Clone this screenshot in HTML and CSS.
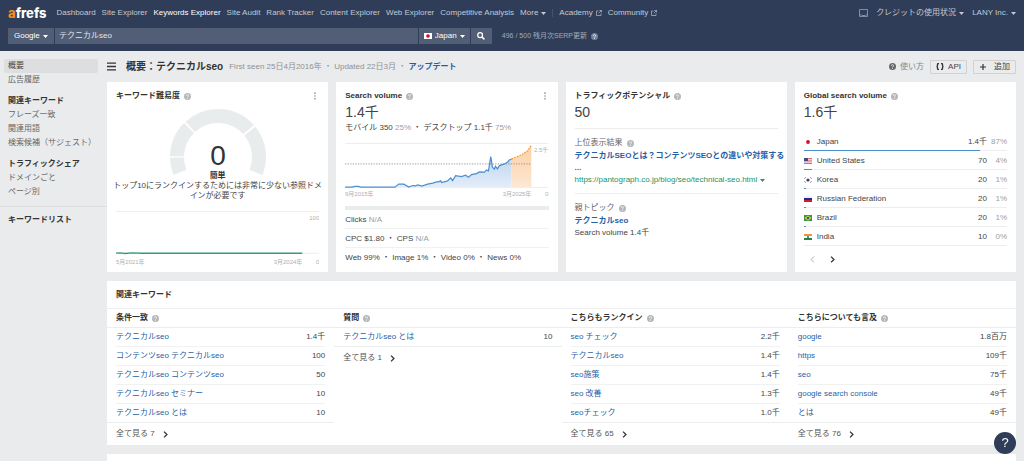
FILE: index.html
```html
<!DOCTYPE html>
<html lang="ja">
<head>
    <meta charset="UTF-8">
    <meta name="viewport" content="width=device-width, initial-scale=1.0">
    <title>概要：テクニカルseo</title>
    <link rel="stylesheet" href="styles.css">
</head>
<body>
<svg class="sprite" aria-hidden="true">
    <symbol id="help" viewBox="0 0 14 14">
        <circle cx="7" cy="7" r="7" fill="currentColor"/>
        <path d="M4.8 5.5a2.2 2.2 0 1 1 3.3 1.9c-.8.4-1.1.7-1.1 1.5M7 10.1v1.5" fill="none" stroke="#fff" stroke-width="1.5"/>
    </symbol>
    <symbol id="caret" viewBox="0 0 10 6">
        <path d="M0 0h10L5 6z" fill="currentColor"/>
    </symbol>
    <symbol id="external" viewBox="0 0 12 12">
        <path d="M5 2H1v9h9V7M7 1h4v4M11 1 5.5 6.5" fill="none" stroke="currentColor" stroke-width="1.3"/>
    </symbol>
    <symbol id="dots" viewBox="0 0 4 14">
        <circle cx="2" cy="2" r="1.4"/><circle cx="2" cy="7" r="1.4"/><circle cx="2" cy="12" r="1.4"/>
    </symbol>
    <symbol id="next" viewBox="0 0 8 12">
        <path d="m1.5 1 5 5-5 5" fill="none" stroke="currentColor" stroke-width="2.2"/>
    </symbol>
</svg>

<header class="topbar">
    <div class="topbar-row">
        <a class="logo" href="#"><span>a</span>frefs</a>
        <nav class="nav">
            <a href="#">Dashboard</a>
            <a href="#">Site Explorer</a>
            <a href="#" class="active">Keywords Explorer</a>
            <a href="#">Site Audit</a>
            <a href="#">Rank Tracker</a>
            <a href="#">Content Explorer</a>
            <a href="#">Web Explorer</a>
            <a href="#">Competitive Analysis</a>
            <button type="button">More <svg class="caret"><use href="#caret"/></svg></button>
            <span class="nav-divider"></span>
            <a href="#">Academy <svg class="external"><use href="#external"/></svg></a>
            <a href="#">Community <svg class="external"><use href="#external"/></svg></a>
        </nav>
        <div class="account">
            <svg class="inbox" viewBox="0 0 18 16"><path d="M1 1h16v14H1zM1 12h4l1 1h6l1-1h4" fill="none" stroke="currentColor" stroke-width="1.6"/></svg>
            <button type="button">クレジットの使用状況 <svg class="caret"><use href="#caret"/></svg></button>
            <button type="button">LANY Inc. <svg class="caret"><use href="#caret"/></svg></button>
        </div>
    </div>
    <div class="topbar-row search-row">
        <form class="search">
            <label class="search-select">
                <select aria-label="検索エンジン"><option>Google</option></select>
                <svg class="caret"><use href="#caret"/></svg>
            </label>
            <input type="text" aria-label="キーワード" value="テクニカルseo">
            <label class="search-select">
                <svg class="flag" viewBox="0 0 8 6"><path d="M0 0h8v6H0z" fill="#fff"/><circle cx="4" cy="3" r="1.8" fill="#c8102e"/></svg>
                <select aria-label="国"><option>Japan</option></select>
                <svg class="caret"><use href="#caret"/></svg>
            </label>
            <button type="submit" aria-label="検索">
                <svg class="glass" viewBox="0 0 14 14"><circle cx="5.5" cy="5.5" r="4.2" fill="none" stroke="#fff" stroke-width="2.2"/><path d="m8.5 8.5 4.5 4.5" stroke="#fff" stroke-width="2.8"/></svg>
            </button>
        </form>
        <div class="quota">496 / 500 残月次SERP更新 <svg class="help"><use href="#help"/></svg></div>
    </div>
</header>

<div class="layout">
    <aside class="sidebar">
        <a href="#" class="selected">概要</a>
        <a href="#">広告履歴</a>
        <h3>関連キーワード</h3>
        <a href="#">フレーズ一致</a>
        <a href="#">関連用語</a>
        <a href="#">検索候補（サジェスト）</a>
        <h3>トラフィックシェア</h3>
        <a href="#">ドメインごと</a>
        <a href="#">ページ別</a>
        <div class="sidebar-lists"><h3>キーワードリスト</h3></div>
    </aside>

    <main class="main">
        <div class="page-head">
            <button type="button" class="menu" aria-label="メニュー">
                <svg viewBox="0 0 8 8"><path d="M0 1h8M0 4h8M0 7h8" stroke="#333" stroke-width="1.2"/></svg>
            </button>
            <h1>概要：テクニカルseo</h1>
            <p>First seen 25日4月2016年 ・ Updated 22日3月 ・ <a href="#">アップデート</a></p>
            <div class="page-actions">
                <button type="button" class="how-to"><svg class="help"><use href="#help"/></svg> 使い方</button>
                <button type="button" class="outlined">
                    <svg class="braces" viewBox="0 0 16 14"><path d="M6 1H5Q3 1 3 3v2Q3 7 1 7q2 0 2 2v2q0 2 2 2h1M10 1h1q2 0 2 2v2q0 2 2 2-2 0-2 2v2q0 2-2 2h-1" fill="none" stroke="#333" stroke-width="2.6"/></svg>
                    API
                </button>
                <button type="button" class="outlined add">
                    <svg class="plus" viewBox="0 0 8 8"><path d="M4 1v6M1 4h6" stroke="#333" stroke-width="1.2"/></svg>
                    追加
                </button>
            </div>
        </div>

        <div class="cards">
            <section class="card">
                <div class="card-title">
                    <h2>キーワード難易度</h2>
                    <svg class="help"><use href="#help"/></svg>
                    <button type="button" class="more" aria-label="メニュー"><svg><use href="#dots"/></svg></button>
                </div>
                <div class="difficulty">
                    <svg class="gauge" viewBox="0 0 96 66">
                        <g fill="none" stroke="#e9ecec" stroke-width="14">
                            <path d="M10 63.4A41 41 0 0 1 7 48.7"/>
                            <path d="M7 47.3A41 41 0 0 1 19 19"/>
                            <path d="M20.3 17.8A41 41 0 0 1 78.5 20.6"/>
                            <path d="M79.9 22.2A41 41 0 0 1 86 63.4"/>
                        </g>
                        <text class="gauge-value" x="48" y="56">0</text>
                    </svg>
                    <strong>簡単</strong>
                    <p>トップ10にランクインするためには非常に少ない参照ドメ<br>インが必要です</p>
                </div>
                <svg class="chart" viewBox="0 0 204 56">
                    <path d="M0 .5h204M187 42.5h17" stroke="#eceded"/>
                    <path d="M0 42.3 4 42 9 42.6 16 42 26 42.4H187" fill="none" stroke="#2f9e74" stroke-width="1.4"/>
                    <text x="204" y="9" class="end">100</text>
                    <text x="0" y="53">5月2021年</text>
                    <text x="187" y="53" class="end">3月2024年</text>
                    <text x="204" y="53" class="end">0</text>
                </svg>
            </section>

            <section class="card">
                <div class="card-title">
                    <h2>Search volume</h2>
                    <svg class="help"><use href="#help"/></svg>
                    <button type="button" class="more" aria-label="メニュー"><svg><use href="#dots"/></svg></button>
                </div>
                <div class="big">1.4千</div>
                <div class="devices">モバイル 350 <span>25%</span> ・ デスクトップ 1.1千 <span>75%</span></div>
                <svg class="chart" viewBox="0 0 204 56">
                    <defs>
                        <linearGradient id="past" x1="0" y1="0" x2="0" y2="1">
                            <stop offset="0" stop-color="#bfd5ef"/>
                            <stop offset="1" stop-color="#e4edf8"/>
                        </linearGradient>
                        <linearGradient id="forecast" x1="0" y1="0" x2="0" y2="1">
                            <stop offset="0" stop-color="#fbd0a6"/>
                            <stop offset="1" stop-color="#fde7d4"/>
                        </linearGradient>
                    </defs>
                    <path d="M0 .5h204M0 44.5h204" stroke="#eceded"/>
                    <path d="M50 44.3 54 41.3H59L64 44 73 42 77 43.3 88 40.3 96 38 97 39.7 103 38 106 35 108 37.7 111 32.7 117 33.7 121 32.3 124 34.3 127 31.7 135 29 140 29.3 142 27 144 28 146.3 13.7 148 24.3 150 26.3 151 23.3 153 26 155 22.7 160 21 163 19.3 167.3 16V44.3z" fill="url(#past)"/>
                    <path d="M167.3 16 172 14 177 12 183 8 187 2.7V44.3H167.3z" fill="url(#forecast)"/>
                    <path d="M0 21h187" stroke="#858585" stroke-width=".8" stroke-dasharray="1.3 1.3"/>
                    <path d="M0 44.3H7L10 43.5H13L16 44.3H50L54 41.3H59L64 44.3 68 42.7 71 43 73 42 77 43.3 83 41.3 88 40.3 92 39H94L96 38 97 39.7 103 38 106 35 108 37.7 111 32.7 117 33.7 121 32.3 124 34.3 127 31.7 132 30.7 135 29 140 29.3 142 27 144 28 146.3 13.7 148 24.3 150 26.3 151 23.3 153 26 155 22.7 160 21 163 19.3 165 17 167.3 16" fill="none" stroke="#4a8fd0" stroke-width="1.2"/>
                    <path d="M167.3 16 172 14 177 12 183 8 187 2.7" fill="none" stroke="#f0963c" stroke-width="1.3" stroke-dasharray="1.6 1.2"/>
                    <text x="204" y="9" class="end">2.5千</text>
                    <text x="0" y="53">9月2015年</text>
                    <text x="187" y="53" class="end">3月2025年</text>
                    <text x="204" y="53" class="end">0</text>
                </svg>
                <div class="clicks-bar"></div>
                <div class="metric">Clicks <span>N/A</span></div>
                <div class="metric">CPC $1.80 ・ CPS <span>N/A</span></div>
                <div class="metric">Web 99% ・ Image 1% ・ Video 0% ・ News 0%</div>
            </section>

            <section class="card">
                <div class="card-title">
                    <h2>トラフィックポテンシャル</h2>
                    <svg class="help"><use href="#help"/></svg>
                </div>
                <div class="big">50</div>
                <div class="block">
                    <div class="block-label">上位表示結果 <svg class="help"><use href="#help"/></svg></div>
                    <a href="#" class="top-result">テクニカルSEOとは？コンテンツSEOとの違いや対策する<br>...</a>
                    <a href="#" class="url">https://pantograph.co.jp/blog/seo/technical-seo.html <svg class="caret"><use href="#caret"/></svg></a>
                </div>
                <div class="block">
                    <div class="block-label">親トピック <svg class="help"><use href="#help"/></svg></div>
                    <a href="#" class="parent-topic">テクニカルseo</a>
                    <div>Search volume 1.4千</div>
                </div>
            </section>

            <section class="card">
                <div class="card-title">
                    <h2>Global search volume</h2>
                    <svg class="help"><use href="#help"/></svg>
                </div>
                <div class="big">1.6千</div>
                <table class="countries">
                    <tr style="--share: 87%">
                        <td><svg class="flag" viewBox="0 0 8 6"><path d="M0 0h8v6H0z" fill="#fff"/><circle cx="4" cy="3" r="1.9" fill="#c8102e"/></svg></td>
                        <td>Japan</td><td>1.4千</td><td>87%</td>
                    </tr>
                    <tr style="--share: 4%">
                        <td><svg class="flag" viewBox="0 0 8 6"><path d="M0 0h8v6H0z" fill="#fff"/><path d="M0 .5h8M0 2.2h8M0 3.9h8M0 5.5h8" stroke="#d0485a" stroke-width=".8"/><path d="M0 0h4v3H0z" fill="#3c4a86"/></svg></td>
                        <td>United States</td><td>70</td><td>4%</td>
                    </tr>
                    <tr style="--share: 1%">
                        <td><svg class="flag" viewBox="0 0 8 6"><path d="M0 0h8v6H0z" fill="#fff"/><path d="M2.4 3a1.6 1.6 0 0 1 3.2 0z" fill="#c8102e"/><path d="M2.4 3a1.6 1.6 0 0 0 3.2 0z" fill="#1c3f8c"/><path d="m.6 1.5 1-1M.6 4.5l1 1M6.4.5l1 1M6.4 5.5l1-1" stroke="#222" stroke-width=".9"/></svg></td>
                        <td>Korea</td><td>20</td><td>1%</td>
                    </tr>
                    <tr style="--share: 1%">
                        <td><svg class="flag" viewBox="0 0 8 6"><path d="M0 0h8v2H0z" fill="#f4f4f4"/><path d="M0 2h8v2H0z" fill="#1a2a9c"/><path d="M0 4h8v2H0z" fill="#d01c28"/></svg></td>
                        <td>Russian Federation</td><td>20</td><td>1%</td>
                    </tr>
                    <tr style="--share: 1%">
                        <td><svg class="flag" viewBox="0 0 8 6"><path d="M0 0h8v6H0z" fill="#2f9a3c"/><path d="m4 .6 3.4 2.4L4 5.4.6 3z" fill="#f2d53c"/><circle cx="4" cy="3" r="1.3" fill="#2c4d94"/></svg></td>
                        <td>Brazil</td><td>20</td><td>1%</td>
                    </tr>
                    <tr style="--share: 0%">
                        <td><svg class="flag" viewBox="0 0 8 6"><path d="M0 0h8v2H0z" fill="#f0943a"/><path d="M0 2h8v2H0z" fill="#fff"/><path d="M0 4h8v2H0z" fill="#23893a"/><circle cx="4" cy="3" r=".9" fill="#33408c"/></svg></td>
                        <td>India</td><td>10</td><td>0%</td>
                    </tr>
                </table>
                <div class="pager">
                    <button type="button" aria-label="前へ" disabled><svg viewBox="0 0 8 12"><path d="m6.5 1-5 5 5 5" fill="none" stroke="currentColor" stroke-width="1.6"/></svg></button>
                    <button type="button" aria-label="次へ"><svg><use href="#next"/></svg></button>
                </div>
            </section>
        </div>

        <section class="related">
            <h2>関連キーワード</h2>
            <div class="related-columns">
                <div class="related-column">
                    <h3>条件一致 <svg class="help"><use href="#help"/></svg></h3>
                    <ul>
                        <li><a href="#">テクニカルseo</a><span>1.4千</span></li>
                        <li><a href="#">コンテンツseo テクニカルseo</a><span>100</span></li>
                        <li><a href="#">テクニカルseo コンテンツseo</a><span>50</span></li>
                        <li><a href="#">テクニカルseo セミナー</a><span>10</span></li>
                        <li><a href="#">テクニカルseo とは</a><span>10</span></li>
                    </ul>
                    <a href="#" class="view-all">全て見る 7 <svg><use href="#next"/></svg></a>
                </div>
                <div class="related-column">
                    <h3>質問 <svg class="help"><use href="#help"/></svg></h3>
                    <ul>
                        <li><a href="#">テクニカルseo とは</a><span>10</span></li>
                    </ul>
                    <a href="#" class="view-all">全て見る 1 <svg><use href="#next"/></svg></a>
                </div>
                <div class="related-column">
                    <h3>こちらもランクイン <svg class="help"><use href="#help"/></svg></h3>
                    <ul>
                        <li><a href="#">seo チェック</a><span>2.2千</span></li>
                        <li><a href="#">テクニカルseo</a><span>1.4千</span></li>
                        <li><a href="#">seo施策</a><span>1.4千</span></li>
                        <li><a href="#">seo 改善</a><span>1.3千</span></li>
                        <li><a href="#">seoチェック</a><span>1.0千</span></li>
                    </ul>
                    <a href="#" class="view-all">全て見る 65 <svg><use href="#next"/></svg></a>
                </div>
                <div class="related-column">
                    <h3>こちらについても言及 <svg class="help"><use href="#help"/></svg></h3>
                    <ul>
                        <li><a href="#">google</a><span>1.8百万</span></li>
                        <li><a href="#">https</a><span>109千</span></li>
                        <li><a href="#">seo</a><span>75千</span></li>
                        <li><a href="#">google search console</a><span>49千</span></li>
                        <li><a href="#">とは</a><span>49千</span></li>
                    </ul>
                    <a href="#" class="view-all">全て見る 76 <svg><use href="#next"/></svg></a>
                </div>
            </div>
        </section>

        <section class="next-panel"></section>
    </main>
</div>

<button type="button" class="support" aria-label="ヘルプ">?</button>
</body>
</html>
```
FILE: styles.css
```css
* {
    box-sizing: border-box;
}

body {
    display: flex;
    flex-direction: column;
    min-height: 100vh;
    margin: 0;
    background-color: #e9ebec;
    color: #444;
    font-family: "Liberation Sans", "Noto Sans CJK JP", sans-serif;
    font-size: 8px;
    line-height: 14px;
}

h1, h2, h3, p, ul {
    margin: 0;
    padding: 0;
    font-size: 8px;
}

h1, h2, h3 {
    color: #333;
}

a {
    color: #1f5fa8;
    text-decoration: none;
}

button, input, select {
    margin: 0;
    padding: 0;
    border: none;
    background: none;
    color: inherit;
    font: inherit;
}

button {
    cursor: pointer;
}

svg {
    flex: none;
}

.sprite {
    display: none;
}

.help {
    width: 7px;
    height: 7px;
    color: #b4b7ba;
}

.caret {
    width: 5px;
    height: 3px;
}

.external {
    width: 6px;
    height: 6px;
}

.flag {
    display: block;
    width: 8px;
    height: 6px;
}

/* top bar */
.topbar {
    height: 51px;
    padding: 5px 8px 0;
    background-color: #2f3d58;
    color: #c3c9d3;
}

.topbar-row {
    display: flex;
    align-items: center;
    height: 16px;
}

.logo {
    margin-right: 10px;
    color: #fff;
    font-family: Inter, sans-serif;
    font-size: 13px;
    font-weight: 800;
}

.logo span {
    color: #f68b1f;
}

.nav, .account {
    display: flex;
    align-items: center;
    white-space: nowrap;
}

.nav {
    gap: 6px;
}

.account {
    gap: 8px;
    margin-left: auto;
}

.nav a, .nav button, .account button {
    display: flex;
    align-items: center;
    gap: 3px;
    color: #c3c9d3;
}

.nav .active {
    color: #fff;
}

.nav-divider {
    width: 1px;
    height: 8px;
    background-color: #46536c;
}

.inbox {
    width: 9px;
    height: 8px;
    color: #97a1b2;
}

.search-row {
    margin-top: 7px;
}

.search {
    display: flex;
    gap: 1px;
    width: 48%;
    height: 16px;
    border-radius: 1px;
    overflow: hidden;
}

.search > * {
    background-color: #525e75;
}

.search input {
    flex: 1;
    min-width: 0;
    padding: 0 4px;
    color: #e4e7ec;
}

.search-select {
    display: flex;
    align-items: center;
    gap: 3px;
    padding: 0 6px;
    color: #fff;
}

.search-select:last-of-type {
    padding: 0 5px;
}

.search-select select {
    appearance: none;
}

.search button {
    width: 21px;
}

.glass {
    display: block;
    width: 8px;
    height: 8px;
    margin: 0 auto;
}

.quota {
    display: flex;
    align-items: center;
    gap: 4px;
    margin-left: 10px;
    font-size: 7px;
    color: #a3acba;
}

.quota .help {
    color: #76829a;
}

/* sidebar */
.layout {
    display: flex;
    flex: 1;
}

.sidebar {
    display: flex;
    flex: none;
    flex-direction: column;
    width: 107px;
    padding-top: 8px;
}

.sidebar a {
    margin: 0 9px 0 4px;
    padding: 0 4px;
    color: #666;
    white-space: nowrap;
}

.sidebar .selected {
    border-radius: 2px;
    background-color: #dcdedf;
    color: #444;
}

.sidebar h3 {
    margin-top: 7px;
    padding: 0 8px;
}

.sidebar-lists {
    margin-top: 7px;
    border-top: 1px solid #dcdedf;
}

.sidebar-lists h3 {
    margin-top: 6px;
}

/* page heading */
.main {
    display: flex;
    flex: 1;
    flex-direction: column;
    min-width: 0;
    padding-right: 8px;
}

.page-head {
    display: flex;
    align-items: center;
    height: 31px;
}

.page-head h1 {
    margin: 0 6px 0 10px;
    font-size: 10px;
}

.page-head p {
    color: #8f9295;
}

.page-head p a {
    font-weight: bold;
}

.menu svg {
    display: block;
    width: 9px;
    height: 9px;
}

.page-actions {
    display: flex;
    gap: 6px;
    margin-left: auto;
}

.page-actions button {
    display: flex;
    align-items: center;
    gap: 4px;
    height: 14px;
    line-height: 12px;
}

.how-to {
    color: #85888b;
}

.how-to .help {
    color: #66696c;
}

.page-actions .outlined {
    padding: 0 5px;
    border: 1px solid #cfd1d3;
    border-radius: 1px;
}

.page-actions .add {
    gap: 7px;
}

.braces {
    width: 8px;
    height: 7px;
}

.plus {
    width: 8px;
    height: 8px;
}

/* overview cards */
.cards {
    display: grid;
    grid-template-columns: repeat(4, 1fr);
    gap: 8px;
}

.card {
    min-width: 0;
    padding: 7px 9px 5px;
    background-color: #fff;
}

.card-title {
    display: flex;
    align-items: center;
    gap: 4px;
}

.more {
    width: 8px;
    margin-left: auto;
    color: #777;
}

.more svg {
    display: block;
    width: 8px;
    height: 8px;
    fill: #888;
}

.big {
    font-size: 14px;
    line-height: 18px;
}

.difficulty {
    display: flex;
    flex-direction: column;
    align-items: center;
    margin: 6px 0 10px;
    line-height: 10px;
    text-align: center;
    white-space: nowrap;
}

.gauge {
    width: 96px;
}

.gauge-value {
    fill: #333;
    font-size: 28px;
    text-anchor: middle;
}

.difficulty strong {
    margin-top: -4px;
    color: #333;
}

.chart {
    display: block;
    width: 100%;
}

.chart text {
    fill: #aeb1b4;
    font-size: 6px;
}

.chart .end {
    text-anchor: end;
}

.devices {
    margin-bottom: 8px;
    white-space: nowrap;
}

.devices span, .metric span {
    color: #9b9ea1;
}

.clicks-bar {
    height: 4px;
    margin-top: 7px;
    background-color: #e9ebec;
}

.metric {
    height: 19px;
    border-bottom: 1px solid #f0f1f1;
    line-height: 19px;
    white-space: nowrap;
}

.metric:last-child {
    border-bottom: none;
}

.block {
    margin-top: 7px;
    padding-top: 7px;
    border-top: 1px solid #eceded;
    line-height: 12px;
    white-space: nowrap;
}

.block a {
    display: block;
}

.block-label {
    display: flex;
    align-items: center;
    gap: 4px;
    height: 14px;
    color: #666;
}

.top-result, .parent-topic {
    font-weight: bold;
}

.block .url {
    display: flex;
    align-items: center;
    gap: 3px;
    color: #229464;
}

.countries {
    width: 100%;
    margin-top: 11px;
    border-collapse: collapse;
    font-size: 8px;
}

.countries tr {
    height: 19px;
    background-image: linear-gradient(#4a8fd0, #4a8fd0), linear-gradient(#eceded, #eceded);
    background-position: left bottom;
    background-repeat: no-repeat;
    background-size: var(--share) 1px, 100% 1px;
}

.countries td {
    padding: 0;
}

.countries td:first-child {
    width: 13px;
}

.countries td:nth-child(3) {
    text-align: right;
}

.countries td:last-child {
    width: 20px;
    color: #9b9ea1;
    text-align: right;
}

.pager {
    display: flex;
    gap: 4px;
    padding-left: 1px;
    margin-top: 5px;
}

.pager button {
    width: 16px;
    height: 16px;
    color: #333;
}

.pager button:disabled {
    color: #aaa;
}

.pager svg {
    display: block;
    width: 5px;
    height: 7px;
    margin: 0 auto;
}

/* related keywords */
.related {
    margin-top: 9px;
    background-color: #fff;
}

.related h2 {
    padding: 0 9px;
    border-bottom: 1px solid #eceded;
    line-height: 27px;
}

.related-columns {
    display: grid;
    grid-template-columns: repeat(4, 1fr);
}

.related-column h3 {
    display: flex;
    align-items: center;
    gap: 4px;
    height: 19px;
    padding: 0 9px;
    border-bottom: 1px solid #eceded;
}

.related-column ul {
    border-bottom: 1px solid #eceded;
    list-style: none;
}

.related-column li {
    display: flex;
    justify-content: space-between;
    height: 19px;
    margin: 0 9px;
    border-bottom: 1px solid #f0f1f1;
    line-height: 18px;
}

.related-column li:last-child {
    height: 18px;
    border-bottom: none;
}

.view-all {
    display: flex;
    align-items: center;
    gap: 8px;
    height: 22px;
    padding: 0 9px;
    color: #555;
}

.view-all svg {
    width: 5px;
    height: 7px;
    color: #333;
}

.next-panel {
    flex: 1;
    margin-top: 9px;
    background-color: #fff;
}

.support {
    position: fixed;
    right: 8px;
    bottom: 7px;
    width: 22px;
    height: 22px;
    border-radius: 50%;
    background-color: #2f3d58;
    color: #fff;
    font-size: 13px;
}
```
